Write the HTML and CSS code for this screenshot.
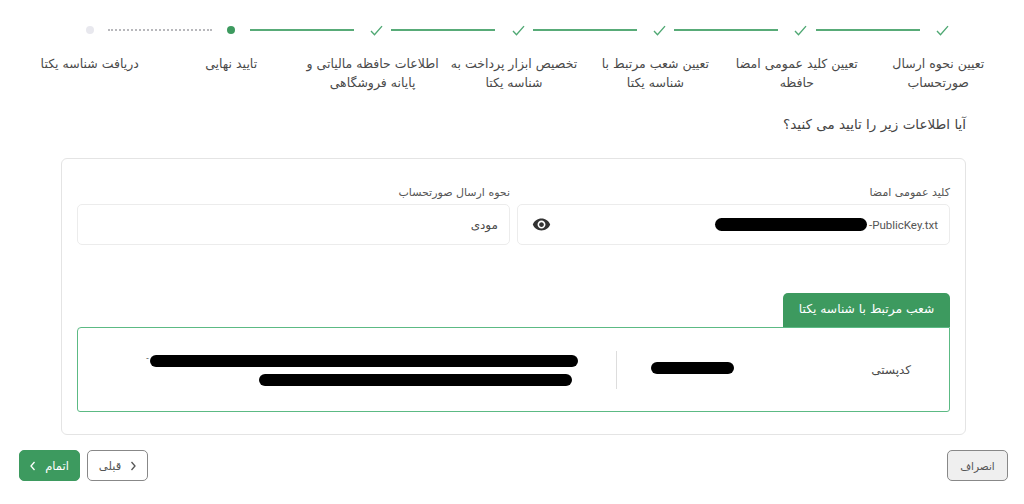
FILE: index.html
```html
<!DOCTYPE html>
<html lang="fa" dir="rtl">
<head>
<meta charset="utf-8">
<title>تایید نهایی</title>
<link rel="stylesheet" href="styles.css">
</head>
<body>
<main class="page">
  <div class="track">
    <span class="slot slot-done"><svg class="check" viewBox="0 0 14 12"><path d="M1 6.5 4.8 10.5 13 1.2"/></svg></span>
    <span class="line"></span>
    <span class="slot slot-done"><svg class="check" viewBox="0 0 14 12"><path d="M1 6.5 4.8 10.5 13 1.2"/></svg></span>
    <span class="line"></span>
    <span class="slot slot-done"><svg class="check" viewBox="0 0 14 12"><path d="M1 6.5 4.8 10.5 13 1.2"/></svg></span>
    <span class="line"></span>
    <span class="slot slot-done"><svg class="check" viewBox="0 0 14 12"><path d="M1 6.5 4.8 10.5 13 1.2"/></svg></span>
    <span class="line"></span>
    <span class="slot slot-done"><svg class="check" viewBox="0 0 14 12"><path d="M1 6.5 4.8 10.5 13 1.2"/></svg></span>
    <span class="line"></span>
    <span class="slot"><span class="dot dot-active"></span></span>
    <span class="line line-pending"></span>
    <span class="slot"><span class="dot dot-pending"></span></span>
  </div>
  <ol class="labels">
    <li>تعیین نحوه ارسال صورتحساب</li>
    <li>تعیین کلید عمومی امضا حافظه</li>
    <li>تعیین شعب مرتبط با شناسه یکتا</li>
    <li>تخصیص ابزار پرداخت به شناسه یکتا</li>
    <li>اطلاعات حافظه مالیاتی و پایانه فروشگاهی</li>
    <li>تایید نهایی</li>
    <li>دریافت شناسه یکتا</li>
  </ol>
  <h1 class="question">آیا اطلاعات زیر را تایید می کنید؟</h1>
  <section class="card">
    <div class="fields">
      <div class="field">
        <label class="field-label">کلید عمومی امضا</label>
        <div class="field-box">
          <span class="file"><span class="file-name" dir="ltr">-PublicKey.txt</span><span class="redact redact-file"></span></span>
          <svg class="eye" viewBox="0 0 24 24"><path d="M12 4.5C7 4.5 2.73 7.61 1 12c1.73 4.39 6 7.5 11 7.5s9.27-3.11 11-7.5c-1.73-4.39-6-7.5-11-7.5zM12 17c-2.76 0-5-2.24-5-5s2.24-5 5-5 5 2.24 5 5-2.24 5-5 5zm0-8c-1.66 0-3 1.34-3 3s1.34 3 3 3 3-1.34 3-3-1.34-3-3-3z"/></svg>
        </div>
      </div>
      <div class="field">
        <label class="field-label">نحوه ارسال صورتحساب</label>
        <div class="field-box"><span class="value">مودی</span></div>
      </div>
    </div>
    <div class="tab-row"><h2 class="tab">شعب مرتبط با شناسه یکتا</h2></div>
    <div class="branch">
      <span class="postal">کدپستی</span>
      <span class="redact redact-code"></span>
      <span class="divider"></span>
      <div class="address">
        <div class="address-row"><span class="redact redact-a1"></span><span class="hyphen">-</span></div>
        <span class="redact redact-a2"></span>
      </div>
    </div>
  </section>
  <footer class="actions">
    <button class="btn btn-cancel">انصراف</button>
    <div class="nav">
      <button class="btn btn-prev"><svg class="chev" viewBox="0 0 6 10"><path d="M1.5 1 5 5 1.5 9"/></svg>قبلی</button>
      <button class="btn btn-next">اتمام<svg class="chev" viewBox="0 0 6 10"><path d="M4.5 1 1 5 4.5 9"/></svg></button>
    </div>
  </footer>
</main>
</body>
</html>
```
FILE: styles.css
```css
* { box-sizing: border-box; }
html, body { margin: 0; background: #fff; }
body { font-family: "DejaVu Sans", "Noto Sans", sans-serif; color: #555; }
.page { width: 1024px; height: 504px; padding: 22px 15px 0 16px; overflow: hidden; }

.track { display: flex; align-items: center; height: 16px; margin-left: 3px; padding: 0 52px; }
.slot { flex: 0 0 37.4px; display: flex; justify-content: center; align-items: center; }
.slot-done { padding-left: 8px; }
.check { width: 13px; height: 11px; fill: none; stroke: #4fa873; stroke-width: 1.5; }
.line { flex: 1; height: 2px; background: #58ab78; }
.line-pending { height: 0; background: none; border-top: 2px dotted #b8b8bc; }
.dot { width: 8px; height: 8px; border-radius: 50%; }
.dot-active { background: #3d9a5f; }
.dot-pending { background: #e8e8ee; }

.labels { list-style: none; display: grid; grid-template-columns: repeat(7, 1fr); margin: 16px 0 0 3px; padding: 0; height: 60px; }
.labels li { font-size: 12.5px; line-height: 19px; text-align: center; padding: 0 2px; color: #4a4a4a; }

.question { margin: 0; padding: 0 43px; font-size: 13.5px; font-weight: 400; line-height: 20px; color: #444; height: 26px; }

.card { margin: 18px 43px 0 45px; height: 277px; border: 1px solid #e4e4e4; border-radius: 6px; padding: 27px 15px 22px; }
.fields { display: grid; grid-template-columns: 1fr 1fr; gap: 7px; }
.field-label { display: block; font-size: 11px; line-height: 14px; padding-bottom: 4px; color: #555; }
.field-box { height: 41px; border: 1px solid #ececec; border-radius: 5px; display: flex; align-items: center; justify-content: space-between; padding: 0 11px 0 14px; }
.file { display: flex; align-items: center; }
.file-name { font-family: Roboto, sans-serif; font-size: 11.5px; color: #555; }
.value { font-size: 12px; color: #4a4a4a; }
.eye { width: 19px; height: 19px; fill: #333; }

.tab-row { display: flex; margin-top: 48px; }
.tab { margin: 0; width: 167px; height: 34px; background: #3d9a5f; color: #fff; font-size: 12.3px; font-weight: 400; line-height: 32px; text-align: center; border-radius: 5px 5px 0 0; }
.branch { height: 85px; border: 1px solid #5cba84; border-radius: 4px 0 3px 3px; display: flex; align-items: center; }
.postal { font-size: 12px; margin-right: 38px; width: 39px; white-space: nowrap; color: #4a4a4a; }
.redact { display: block; background: #000; border-radius: 7px; }
.redact-file { width: 152px; height: 13px; margin-right: 2px; }
.redact-code { width: 83px; height: 12px; margin: -4px 138px 0 0; }
.divider { width: 1px; height: 38px; background: #ddd; margin-right: 34px; }
.address { margin: 2px 38px 0 0; display: flex; flex-direction: column; gap: 7px; }
.address-row { display: flex; gap: 1px; }
.hyphen { font-size: 8px; line-height: 8px; color: #555; }
.redact-a1 { width: 428px; height: 12px; }
.redact-a2 { width: 313px; height: 12px; margin-right: 6px; }

.actions { display: flex; justify-content: space-between; margin: 15px 1px 0 3px; }
.nav { display: flex; gap: 7px; }
.btn { width: 61px; height: 31px; border-radius: 5px; font-family: inherit; font-size: 11.5px; color: #555; display: flex; align-items: center; justify-content: center; gap: 9px; padding: 0; border: 1px solid #888; background: #fff; }
.btn-cancel { background: #efefef; font-size: 10.5px; }
.btn-next { background: #3d9a5f; border-color: #3d9a5f; color: #fff; }
.chev { width: 6px; height: 10px; fill: none; stroke: currentColor; stroke-width: 1.3; }
```
